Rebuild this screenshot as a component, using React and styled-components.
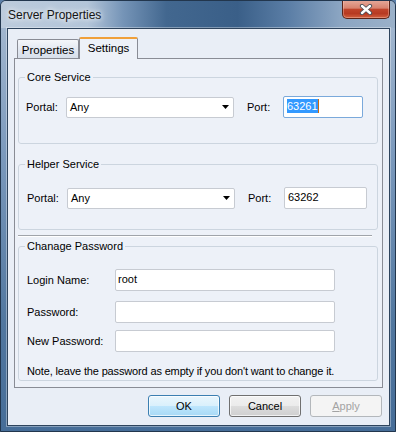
import React from "react";
import styled, { createGlobalStyle } from "styled-components";

const GlobalStyle = createGlobalStyle`
  html, body {
    margin: 0;
    padding: 0;
    background: #5c7fa8;
  }
  body {
    font-family: "Liberation Sans", Arial, sans-serif;
    font-size: 11px;
    color: #000;
  }
`;

const Window = styled.div`
  width: 396px;
  height: 432px;
  box-sizing: border-box;
  display: flex;
  flex-direction: column;
  border: 1px solid #22364d;
  border-radius: 6px 6px 0 0;
  overflow: hidden;
  background: linear-gradient(to bottom, #a9bcd2 0%, #7c9abd 35%, #51779f 75%, #466d98 100%);
`;

const TitleBar = styled.div`
  height: 27px;
  flex: none;
  display: flex;
  align-items: flex-start;
  background: linear-gradient(
    to right,
    #bccbdc 0%,
    #b3c5d9 22%,
    #7594b7 31%,
    #42678f 42%,
    #3a5f88 60%,
    #5b7ea6 73%,
    #8ba5c2 86%,
    #9bb1c9 100%
  );
`;

const Title = styled.span`
  align-self: center;
  margin-left: 7px;
  font: 12px/14px "Liberation Sans", Arial, sans-serif;
  color: #141414;
  text-shadow: 0 0 5px #fff, 0 0 9px rgba(255, 255, 255, 0.8);
`;

const CloseButton = styled.div`
  margin-left: auto;
  margin-right: 5px;
  width: 48px;
  height: 19px;
  margin-top: -1px;
  box-sizing: border-box;
  display: flex;
  align-items: center;
  justify-content: center;
  border: 1px solid #5b2419;
  border-top: none;
  border-radius: 0 0 5px 5px;
  background: linear-gradient(
    to bottom,
    #e6ab9c 0%,
    #d8836f 45%,
    #c0442b 52%,
    #b73a22 75%,
    #d2603f 100%
  );
  box-shadow: inset 0 0 0 1px rgba(255, 220, 210, 0.35);
`;

const Client = styled.div`
  flex: 1;
  margin: 0 5px 5px 6px;
  border: 1px solid #2e445d;
  background: #e9eef6;
  box-shadow: 0 0 0 1px rgba(255, 255, 255, 0.35);
  padding: 8px 6px 0 6px;
  display: flex;
  flex-direction: column;
`;

const TabStrip = styled.div`
  height: 21px;
  display: flex;
  align-items: flex-end;
  padding-left: 3px;
`;

const Tab = styled.div`
  position: relative;
  z-index: ${(p) => (p.$active ? 1 : 0)};
  box-sizing: border-box;
  width: ${(p) => p.$w}px;
  height: ${(p) => (p.$active ? 22 : 19)}px;
  margin-bottom: ${(p) => (p.$active ? -1 : 0)}px;
  padding-top: ${(p) => (p.$active ? 3 : 4)}px;
  line-height: 13px;
  font-size: 11.5px;
  text-align: center;
  border: 1px solid #898c95;
  border-bottom: none;
  border-top: ${(p) => (p.$active ? "2px solid #f0a03a" : "1px solid #898c95")};
  border-radius: 2px 2px 0 0;
  background: ${(p) =>
    p.$active ? "#edf1f8" : "linear-gradient(to bottom, #f4f6fa 0%, #e3e9f2 50%, #d7dfea 100%)"};
`;

const Panel = styled.div`
  border: 1px solid #898c95;
  background: #edf1f8;
  padding: 0 4px 6px 3px;
`;

const Group = styled.fieldset`
  margin: ${(p) => p.$mt}px 0 0 0;
  padding: 0;
  min-inline-size: 0;
  border: 1px solid #ccd5df;
  border-radius: 3px;
`;

const Legend = styled.legend`
  margin-left: 6px;
  padding: 0 2px;
  line-height: 13px;
`;

const GroupBody = styled.div`
  padding: ${(p) => p.$pt}px 8px ${(p) => p.$pb}px ${(p) => p.$pl}px;
`;

const Separator = styled.div`
  margin: 5px 6px 3px 0;
  border-top: 1px solid #a0a4aa;
  border-bottom: 1px solid #ffffff;
`;

const Row = styled.div`
  display: flex;
  align-items: center;
  margin-top: ${(p) => p.$mt || 0}px;
`;

const Label = styled.span`
  flex: none;
  width: ${(p) => p.$w}px;
  line-height: 13px;
  margin-left: ${(p) => p.$ml || 0}px;
`;

const Combo = styled.div`
  flex: none;
  width: 168px;
  height: 21px;
  box-sizing: border-box;
  display: flex;
  align-items: center;
  padding: 0 4px 0 3px;
  border: 1px solid #c7cbd2;
  border-radius: 2px;
  background: #fff;
  line-height: 13px;
`;

const ComboArrow = styled.svg`
  margin-left: auto;
  width: 7px;
  height: 4px;
`;

const TextBox = styled.div`
  flex: none;
  width: ${(p) => p.$w}px;
  height: 22px;
  box-sizing: border-box;
  display: flex;
  align-items: flex-start;
  padding: 2px 3px 0 ${(p) => p.$pl || 3}px;
  border: 1px solid ${(p) => (p.$focused ? "#7aa9db" : "#c7cbd2")};
  border-radius: 2px;
  background: #fff;
  line-height: 14px;
`;

const Selected = styled.span`
  background: #3399ff;
  color: #fff;
`;

const Caret = styled.span`
  width: 1px;
  height: 14px;
  background: #cc6a10;
`;

const Note = styled.div`
  margin-top: 13px;
  line-height: 13px;
  letter-spacing: -0.15px;
`;

const ButtonRow = styled.div`
  display: flex;
  justify-content: flex-end;
  gap: 9px;
  margin-top: 7px;
  padding-right: 1px;
`;

const Button = styled.div`
  width: 72px;
  height: 22px;
  box-sizing: border-box;
  display: flex;
  align-items: center;
  justify-content: center;
  border-radius: 3px;
  line-height: 13px;
  border: 1px solid ${(p) => (p.$variant === "default" ? "#3c7fb1" : p.$variant === "disabled" ? "#b3b7bb" : "#707070")};
  color: ${(p) => (p.$variant === "disabled" ? "#a3a3a3" : "#000")};
  background: ${(p) =>
    p.$variant === "default"
      ? "linear-gradient(to bottom, #eaf6fd 0%, #d9f0fc 50%, #bee6fd 50%, #a7d9f5 100%)"
      : p.$variant === "disabled"
      ? "#f4f4f4"
      : "linear-gradient(to bottom, #f2f2f2 0%, #ebebeb 50%, #dddddd 50%, #cfcfcf 100%)"};
  box-shadow: ${(p) =>
    p.$variant === "disabled" ? "none" : "inset 0 0 0 1px rgba(255, 255, 255, 0.7)"};
`;

const Accel = styled.span`
  text-decoration: underline;
`;

const Arrow = () => (
  <ComboArrow viewBox="0 0 7 4">
    <polygon points="0,0 7,0 3.5,4" fill="#000" />
  </ComboArrow>
);

const CloseGlyph = () => (
  <svg width="14" height="11" viewBox="0 0 14 11">
    <path d="M3 2 L11 9 M11 2 L3 9" stroke="#4a4f57" strokeWidth="4.2" strokeLinecap="round" />
    <path d="M3 2 L11 9 M11 2 L3 9" stroke="#ffffff" strokeWidth="2.4" strokeLinecap="round" />
  </svg>
);

const PortRow = ({ mt, port, focused }) => (
  <Row $mt={mt}>
    <Label $w={40}>Portal:</Label>
    <Combo>
      <span>Any</span>
      <Arrow />
    </Combo>
    <Label $w={36} $ml={13}>Port:</Label>
    <TextBox $w={focused ? 80 : 83} $focused={focused}>
      {focused ? (
        <>
          <Selected>{port}</Selected>
          <Caret />
        </>
      ) : (
        <span>{port}</span>
      )}
    </TextBox>
  </Row>
);

const App = () => {
  return (
    <>
      <GlobalStyle />
      <Window>
        <TitleBar>
          <Title>Server Properties</Title>
          <CloseButton>
            <CloseGlyph />
          </CloseButton>
        </TitleBar>
        <Client>
          <TabStrip>
            <Tab $w={62}>Properties</Tab>
            <Tab $w={59} $active>Settings</Tab>
          </TabStrip>
          <Panel>
            <Group $mt={12}>
              <Legend>Core Service</Legend>
              <GroupBody $pt={12} $pb={25} $pl={7}>
                <PortRow port="63261" focused />
              </GroupBody>
            </Group>
            <Group $mt={14}>
              <Legend>Helper Service</Legend>
              <GroupBody $pt={16} $pb={20} $pl={8}>
                <PortRow port="63262" />
              </GroupBody>
            </Group>
            <Separator />
            <Group $mt={0}>
              <Legend>Chanage Password</Legend>
              <GroupBody $pt={16} $pb={2} $pl={8}>
                <Row>
                  <Label $w={88}>Login Name:</Label>
                  <TextBox $w={220} $pl={2}>root</TextBox>
                </Row>
                <Row $mt={10}>
                  <Label $w={88}>Password:</Label>
                  <TextBox $w={220} />
                </Row>
                <Row $mt={7}>
                  <Label $w={88}>New Password:</Label>
                  <TextBox $w={220} />
                </Row>
                <Note>Note, leave the password as empty if you don't want to change it.</Note>
              </GroupBody>
            </Group>
          </Panel>
          <ButtonRow>
            <Button $variant="default">OK</Button>
            <Button>Cancel</Button>
            <Button $variant="disabled">
              <span>
                <Accel>A</Accel>pply
              </span>
            </Button>
          </ButtonRow>
        </Client>
      </Window>
    </>
  );
};

export default App;
